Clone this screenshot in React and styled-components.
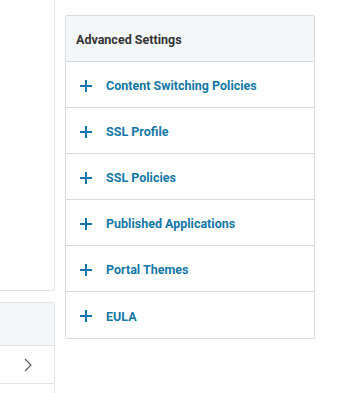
import React from "react";
import styled, { createGlobalStyle } from "styled-components";

const Global = createGlobalStyle`
  html, body { margin: 0; padding: 0; background: #fff; }
  body { font-family: Roboto, "Liberation Sans", sans-serif; }
`;

const Page = styled.div`
  display: grid;
  grid-template-columns: 55px 250px;
  column-gap: 10px;
  width: 339px;
  height: 393px;
  overflow: hidden;
`;

const LeftCol = styled.div`
  display: flex;
  flex-direction: column;
  gap: 11px;
`;

const TopPanel = styled.div`
  height: 291px;
  border-right: 1px solid #e3e3e3;
  border-bottom: 1px solid #e3e3e3;
  border-bottom-right-radius: 3px;
  box-sizing: border-box;
`;

const SidePanel = styled.div`
  border: 1px solid #e3e3e3;
  border-left: none;
  border-top-right-radius: 3px;
  overflow: hidden;
`;

const SideHeader = styled.div`
  height: 42px;
  background: #f3f7fa;
  border-bottom: 1px solid #e3e3e3;
`;

const SideRow = styled.div`
  height: 37px;
  border-bottom: 1px solid #e3e3e3;
  display: flex;
  align-items: center;
  justify-content: flex-end;
  padding-right: 22px;
  color: #555;
`;

const RightCol = styled.div`
  padding-top: 15px;
`;

const Panel = styled.div`
  border: 1px solid #dadada;
  border-radius: 2px;
  overflow: hidden;
`;

const Header = styled.div`
  height: 46px;
  box-sizing: border-box;
  background: #f4f7fa;
  border-bottom: 1px solid #dadada;
  display: flex;
  align-items: center;
  padding: 2px 0 0 10px;
  font-size: 12.5px;
  font-weight: 700;
  color: #333;
`;

const Row = styled.div`
  height: 46px;
  box-sizing: border-box;
  border-bottom: ${(p) => (p.$last ? "none" : "1px solid #dadada")};
  display: flex;
  align-items: center;
  padding: 2px 0 0 14px;
  gap: 14px;
  font-size: 12.5px;
  font-weight: 700;
  color: #1378a7;
`;

const Plus = () => (
  <svg width="12" height="12" viewBox="0 0 12 12">
    <path d="M6 0v12M0 6h12" stroke="#0f74ad" strokeWidth="2" />
  </svg>
);

const Chevron = () => (
  <svg width="8" height="14" viewBox="0 0 8 14">
    <path d="M1 1l6 6-6 6" stroke="#555" strokeWidth="1.1" fill="none" />
  </svg>
);

const items = [
  "Content Switching Policies",
  "SSL Profile",
  "SSL Policies",
  "Published Applications",
  "Portal Themes",
  "EULA",
];

export default function App() {
  return (
    <>
      <Global />
      <Page>
        <LeftCol>
          <TopPanel />
          <SidePanel>
            <SideHeader />
            <SideRow>
              <Chevron />
            </SideRow>
            <SideRow />
          </SidePanel>
        </LeftCol>
        <RightCol>
          <Panel>
            <Header>Advanced Settings</Header>
            {items.map((t, i) => (
              <Row key={t} $last={i === items.length - 1}>
                <Plus />
                {t}
              </Row>
            ))}
          </Panel>
        </RightCol>
      </Page>
    </>
  );
}
